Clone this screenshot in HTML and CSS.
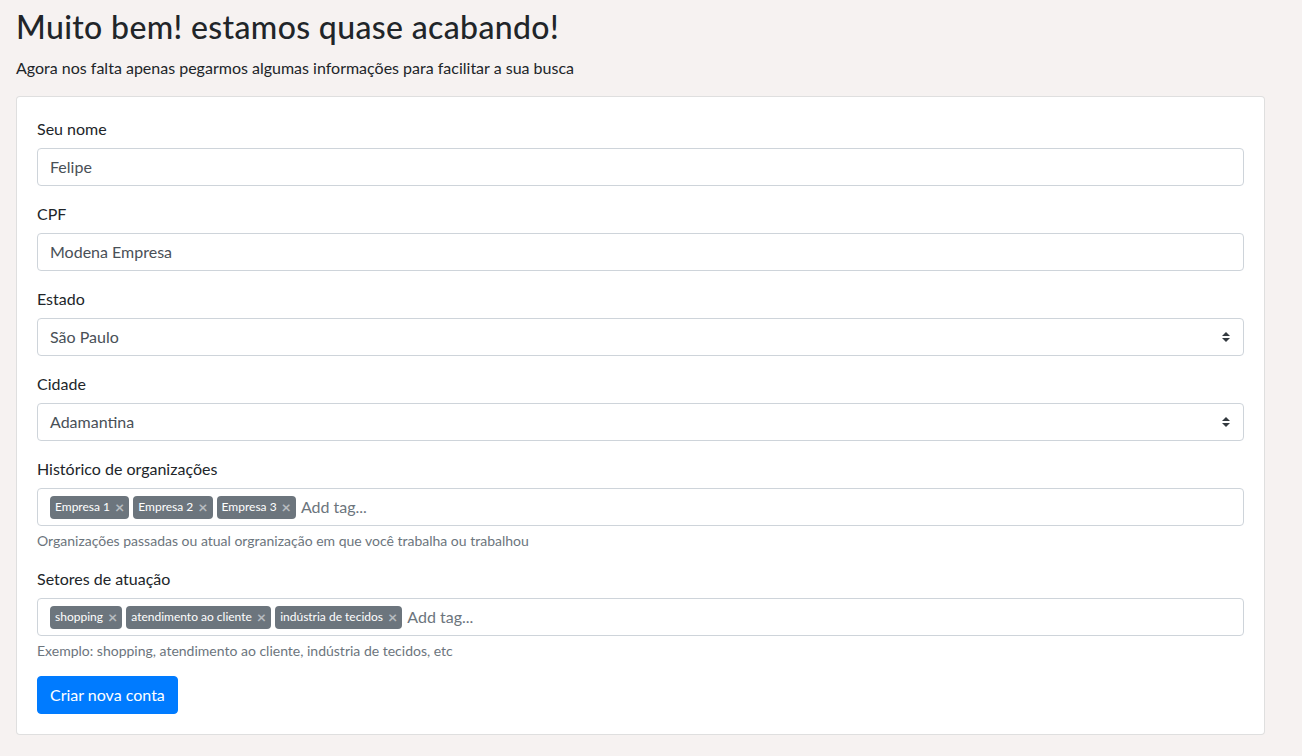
FILE: index.html
```html
<!DOCTYPE html>
<html lang="pt-BR">
<head>
<meta charset="utf-8">
<title>Cadastro</title>
<link rel="stylesheet" href="styles.css">
</head>
<body>
<div class="page">
  <h1 class="title">Muito bem! estamos quase acabando!</h1>
  <p class="lead-text">Agora nos falta apenas pegarmos algumas informações para facilitar a sua busca</p>
  <div class="card">
    <form class="card-body">
      <div class="form-group">
        <label class="label">Seu nome</label>
        <div class="form-control">Felipe</div>
      </div>
      <div class="form-group">
        <label class="label">CPF</label>
        <div class="form-control">Modena Empresa</div>
      </div>
      <div class="form-group">
        <label class="label">Estado</label>
        <div class="form-control select">
          <span>São Paulo</span>
          <svg class="caret" width="8" height="10" viewBox="0 0 4 5"><path fill="#343a40" d="M2 0L0 2h4zm0 5L0 3h4z"/></svg>
        </div>
      </div>
      <div class="form-group">
        <label class="label">Cidade</label>
        <div class="form-control select">
          <span>Adamantina</span>
          <svg class="caret" width="8" height="10" viewBox="0 0 4 5"><path fill="#343a40" d="M2 0L0 2h4zm0 5L0 3h4z"/></svg>
        </div>
      </div>
      <div class="form-group">
        <label class="label">Histórico de organizações</label>
        <div class="form-control tags">
          <span class="tag">Empresa 1<span class="x">×</span></span>
          <span class="tag">Empresa 2<span class="x">×</span></span>
          <span class="tag">Empresa 3<span class="x">×</span></span>
          <span class="add">Add tag...</span>
        </div>
        <small class="help">Organizações passadas ou atual orgranização em que você trabalha ou trabalhou</small>
      </div>
      <div class="form-group">
        <label class="label">Setores de atuação</label>
        <div class="form-control tags">
          <span class="tag">shopping<span class="x">×</span></span>
          <span class="tag">atendimento ao cliente<span class="x">×</span></span>
          <span class="tag">indústria de tecidos<span class="x">×</span></span>
          <span class="add">Add tag...</span>
        </div>
        <small class="help">Exemplo: shopping, atendimento ao cliente, indústria de tecidos, etc</small>
      </div>
      <button type="button" class="btn">Criar nova conta</button>
    </form>
  </div>
</div>
</body>
</html>
```
FILE: styles.css
```css
* { box-sizing: border-box; }
html, body { margin: 0; }
body {
  background: #f6f2f1;
  color: #212529;
  font-family: "Lato", "Liberation Sans", sans-serif;
  font-size: 16px;
  line-height: 1.5;
}
.page {
  padding: 8px 37px 0 16px;
}
.title {
  font-size: 32px;
  font-weight: 500;
  line-height: 1.2;
  letter-spacing: 0.35px;
  margin: 0 0 10px 0;
}
.lead-text {
  margin: 0 0 16px 0;
  line-height: 24px;
}
.card {
  width: 1249px;
  background: #fff;
  border: 1px solid rgba(0,0,0,.125);
  border-radius: 4px;
}
.card-body {
  padding: 20px;
  display: flex;
  flex-direction: column;
}
.form-group {
  display: flex;
  flex-direction: column;
  margin-bottom: 16px;
}
.label {
  line-height: 23px;
  margin-bottom: 8px;
}
.form-control {
  height: 38px;
  padding: 6px 12px;
  border: 1px solid #ced4da;
  border-radius: 4px;
  color: #495057;
  line-height: 24px;
  background: #fff;
}
.select {
  display: flex;
  align-items: center;
  justify-content: space-between;
}
.caret { margin-right: 1px; }
.tags {
  display: flex;
  align-items: center;
  gap: 4px;
  padding: 0 12px;
}
.tag {
  display: inline-flex;
  align-items: center;
  height: 23px;
  padding: 0 5px;
  background: #6c757d;
  color: #fff;
  border-radius: 4px;
  font-size: 12px;
  line-height: 1;
}
.x {
  margin-left: 5px;
  font-size: 16px;
  font-weight: 700;
  color: #b7bcc0;
  line-height: 1;
}
.add {
  color: #6c757d;
  font-size: 16px;
  margin-left: 1px;
}
.help {
  font-size: 14px;
  color: #6c757d;
  margin-top: 4px;
  line-height: 21px;
}
.btn {
  align-self: flex-start;
  height: 38px;
  padding: 6px 12px;
  background: #007bff;
  color: #fff;
  border: 1px solid #007bff;
  border-radius: 4px;
  font-family: inherit;
  font-size: 16px;
  line-height: 24px;
  margin-top: -1px;
}
```
